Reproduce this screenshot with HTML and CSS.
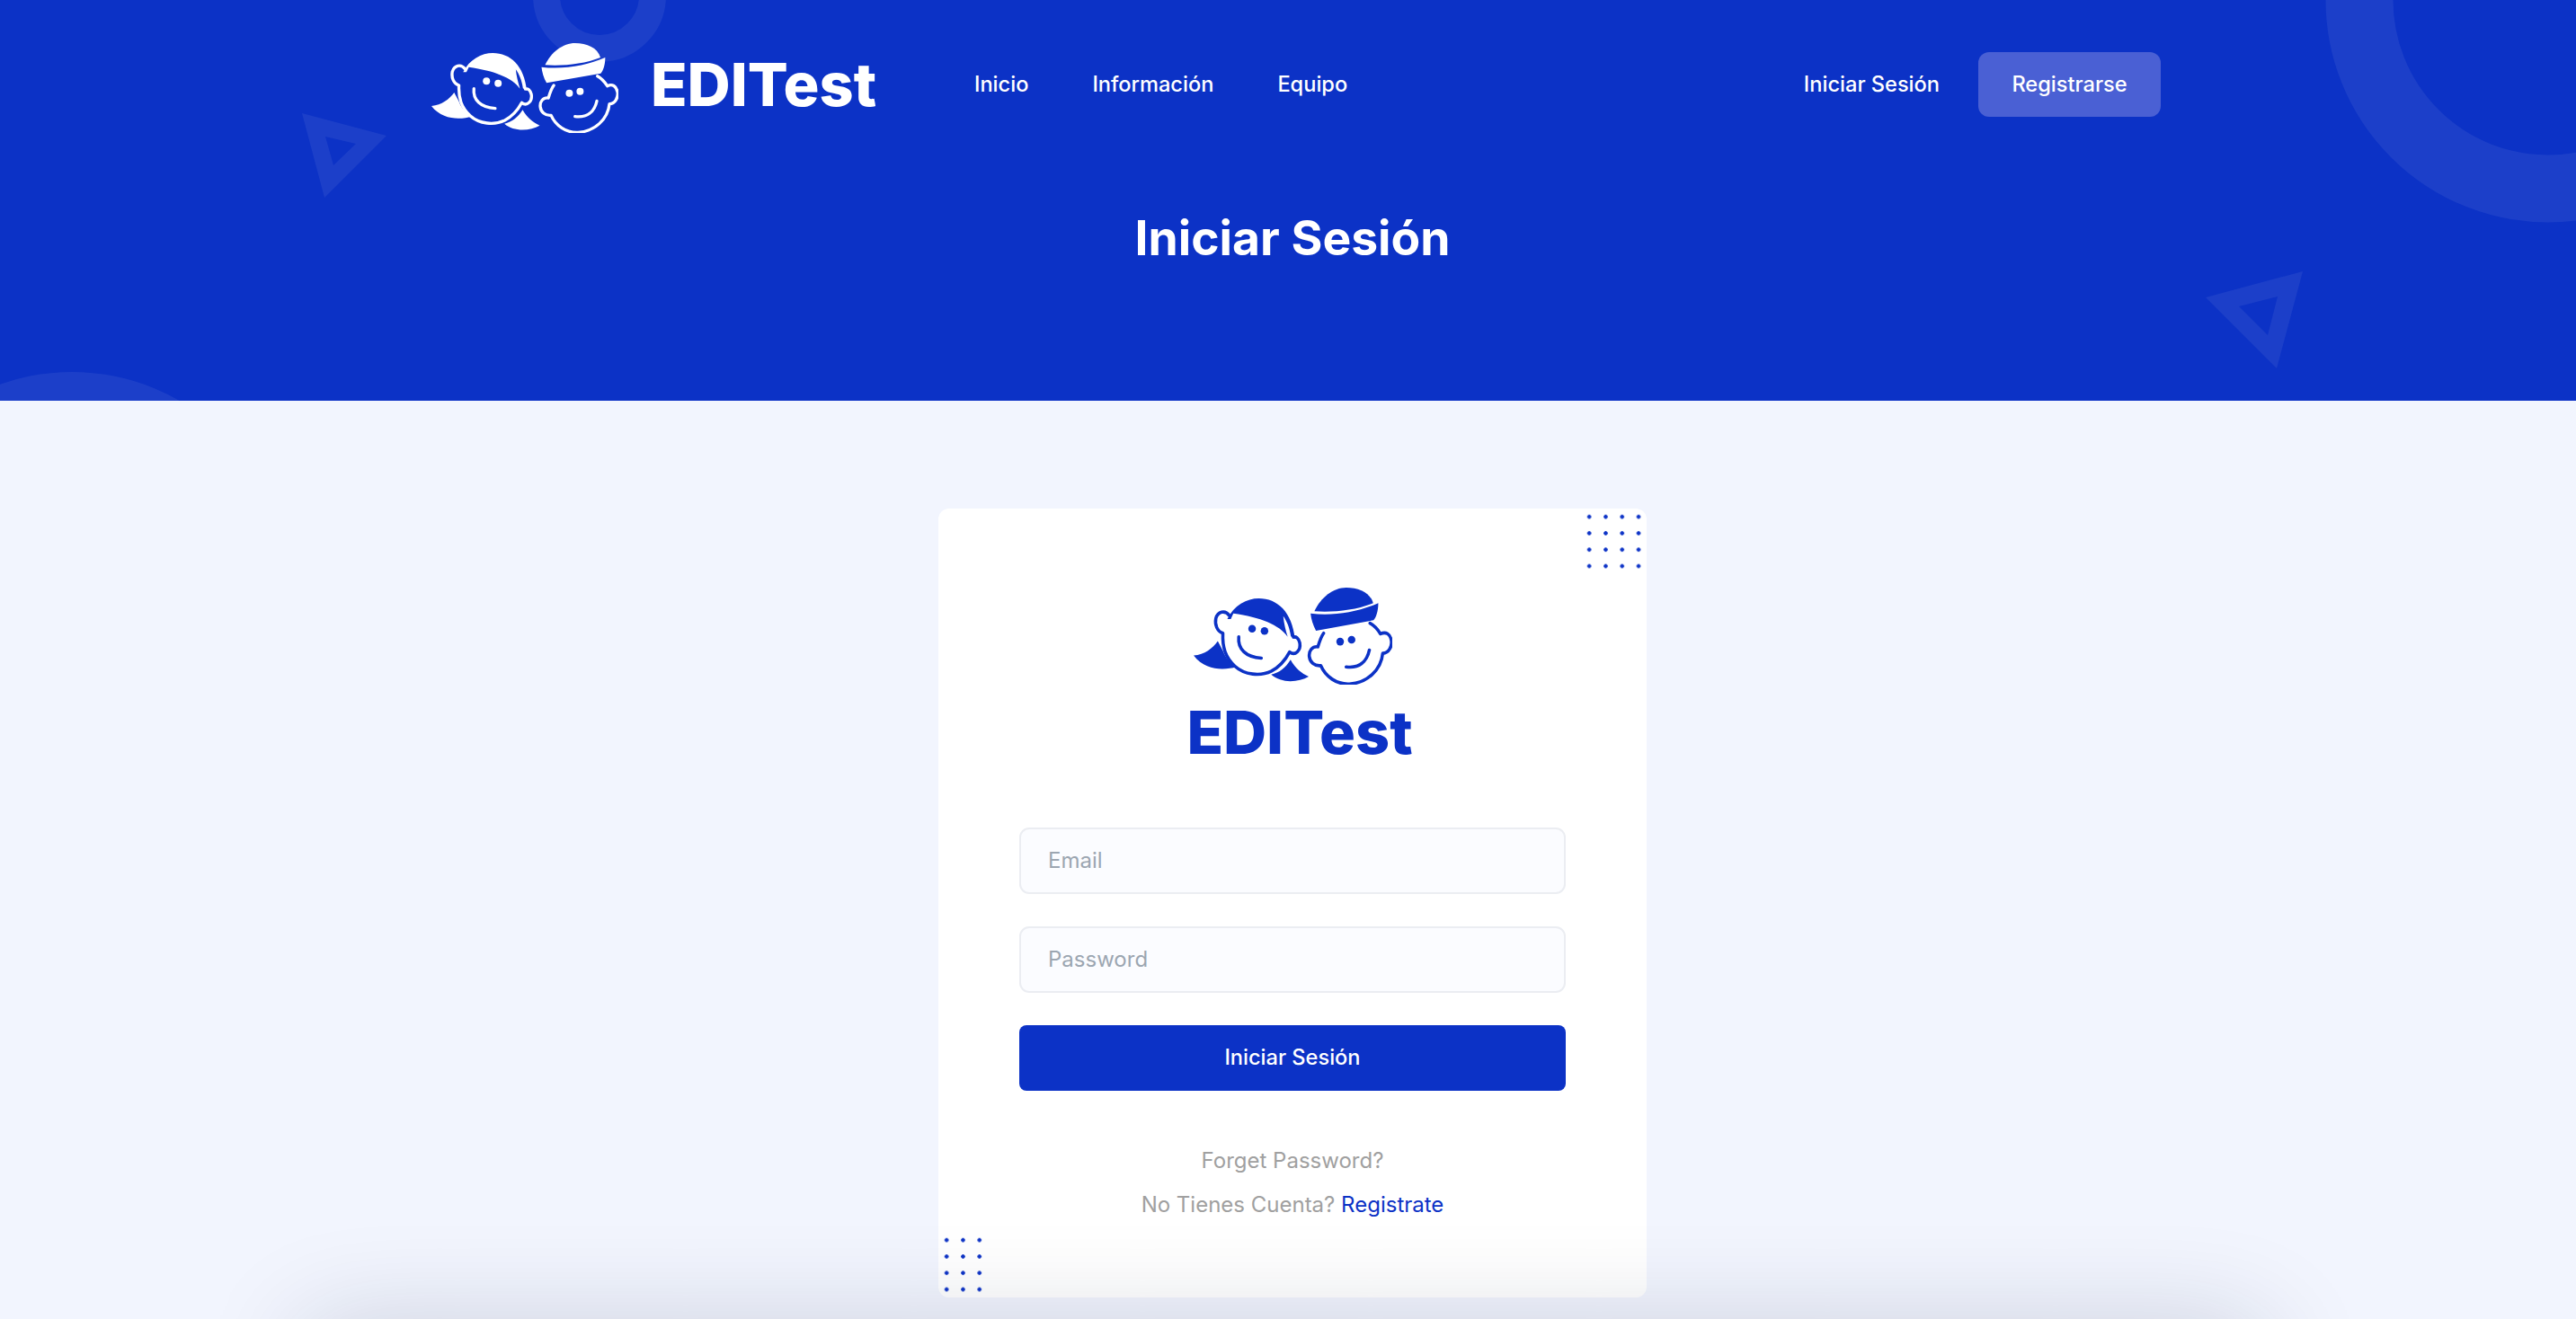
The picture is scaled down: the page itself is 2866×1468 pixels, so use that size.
FILE: index.html
```html
<!DOCTYPE html>
<html lang="es">
<head>
<meta charset="utf-8">
<title>EDITest - Iniciar Sesión</title>
<link rel="stylesheet" href="styles.css">
</head>
<body>
<svg class="defs" width="0" height="0" aria-hidden="true">
  <symbol id="faces" viewBox="30 55 625 300" preserveAspectRatio="none">
    <g fill="currentColor">
      <path d="M136 152C156 110 198 88 235 88C294 88 340 130 349 214L336 206C332 178 323 158 312 143C314 165 320 188 326 207C300 170 240 147 155 135L147 152Z"/>
      <path d="M30 265C65 262 90 242 106 220L122 250C130 272 145 288 164 300C130 310 68 314 30 265Z"/>
      <path d="M274 324C300 318 320 302 335 278C350 305 370 320 392 330C360 348 306 352 274 324Z"/>
      <path d="M410 128C430 85 470 55 510 55C550 55 585 70 595 103C540 125 470 132 410 128Z"/>
      <path d="M398 135C470 144 550 130 611 103C611 128 604 148 596 156L415 188C405 170 400 152 398 135Z"/>
      <circle cx="214" cy="182" r="12"/>
      <circle cx="253" cy="189" r="12"/>
      <circle cx="491" cy="222" r="12"/>
      <circle cx="527" cy="216" r="12"/>
    </g>
    <g fill="none" stroke="currentColor" stroke-width="10" stroke-linecap="round" stroke-linejoin="round">
      <path d="M143 142C128 122 106 130 100 150C96 170 104 190 122 196C120 240 130 270 160 298C190 325 240 330 275 313C300 300 318 280 332 254C350 268 368 248 364 226C360 210 352 206 344 208"/>
      <path d="M172 207C168 245 195 270 243 273"/>
      <path d="M439 196C430 208 425 225 421 238C403 236 392 250 394 268C396 285 410 298 430 296C445 330 480 355 520 353C575 350 620 310 625 258C645 258 655 235 652 218C648 198 635 190 618 198C608 182 598 172 585 165"/>
      <path d="M583 248C575 285 550 305 510 300"/>
    </g>
  </symbol>
</svg>

<header class="hero">
  <svg class="shapes" viewBox="0 0 2866 446" width="2866" height="446" aria-hidden="true">
    <g class="shape-fill">
      <path fill-rule="evenodd" d="M336 126L430 151L361 220ZM362 152L371 184L396 160Z"/>
      <path fill-rule="evenodd" d="M2562 302L2454 331L2533 410ZM2534 330L2491 341L2523 373Z"/>
      <circle cx="80" cy="654" r="240"/>
    </g>
    <g class="shape-ring">
      <circle cx="667" cy="-5" r="59" stroke-width="30"/>
      <circle cx="2835" cy="0" r="210" stroke-width="75"/>
    </g>
  </svg>

  <nav class="nav">
    <a class="brand" href="#">
      <svg class="brand-faces"><use href="#faces"/></svg>
      <span class="brand-name">EDITest</span>
    </a>
    <ul class="menu">
      <li><a class="menu-link" href="#">Inicio</a></li>
      <li><a class="menu-link" href="#">Información</a></li>
      <li><a class="menu-link" href="#">Equipo</a></li>
    </ul>
    <div class="actions">
      <a class="menu-link" href="#">Iniciar Sesión</a>
      <a class="signup" href="#">Registrarse</a>
    </div>
  </nav>

  <h1 class="page-title">Iniciar Sesión</h1>
</header>

<main class="content">
  <section class="card">
    <span class="dots dots-top"></span>
    <span class="dots dots-bottom"></span>
    <div class="card-logo">
      <svg class="card-faces"><use href="#faces"/></svg>
      <span class="card-name">EDITest</span>
    </div>
    <form class="form">
      <input class="field" type="email" placeholder="Email">
      <input class="field" type="password" placeholder="Password">
      <button class="submit" type="button">Iniciar Sesión</button>
    </form>
    <div class="links">
      <p class="links-line"><a class="muted" href="#">Forget Password?</a></p>
      <p class="links-line">No Tienes Cuenta? <a class="accent" href="#">Registrate</a></p>
    </div>
  </section>
</main>

<div class="footer-clip"><div class="footer-shadow"></div></div>
</body>
</html>
```

FILE: styles.css
```css
* { box-sizing: border-box; }

html, body {
  margin: 0;
  height: 1468px;
  overflow: hidden;
}

body {
  position: relative;
  background: #f2f5fe;
  font-family: Inter, "Liberation Sans", sans-serif;
  font-size: 24px;
}

a { text-decoration: none; }

.defs { position: absolute; }

.hero {
  position: relative;
  height: 446px;
  overflow: hidden;
  background: #0c32c6;
  color: #fff;
}

.shapes {
  position: absolute;
  top: 0;
  left: 0;
}

.shape-fill { fill: #fff; fill-opacity: .065; }
.shape-ring { fill: none; stroke: #fff; stroke-opacity: .065; }

.nav {
  position: relative;
  display: flex;
  align-items: flex-start;
  padding: 48px 462px 0 480px;
}

.brand {
  display: flex;
  width: 500px;
  color: #fff;
}

.brand-faces {
  flex: none;
  width: 208px;
  height: 100px;
}

.brand-name {
  margin: 12px 0 0 36px;
  font-size: 66.6px;
  line-height: 67px;
  font-weight: 800;
}

.menu {
  display: flex;
  gap: 71px;
  margin: 10px 0 0 104px;
  padding: 0;
  list-style: none;
}

.menu-link {
  display: block;
  color: #fff;
  font-size: 23.6px;
  font-weight: 500;
  line-height: 71px;
}

.actions {
  display: flex;
  gap: 43px;
  margin: 10px 0 0 auto;
}

.signup {
  display: block;
  width: 203px;
  height: 72px;
  border-radius: 12px;
  background: #4a60d4;
  color: #fff;
  font-size: 23.6px;
  font-weight: 500;
  line-height: 71px;
  text-align: center;
}

.page-title {
  position: relative;
  margin: 84px 0 0;
  padding-left: 10px;
  font-size: 53.4px;
  line-height: 65px;
  font-weight: 700;
  text-align: center;
}

.content {
  padding: 120px 0 0 10px;
}

.card {
  position: relative;
  width: 788px;
  height: 878px;
  margin: 0 auto;
  padding: 88px 90px 0;
  border-radius: 12px;
  background: #fff;
  overflow: hidden;
}

.dots {
  position: absolute;
  background-image: radial-gradient(circle, #0c32c6 1.9px, transparent 2.5px);
  background-size: 18.3px 18.3px;
}

.dots-top {
  top: 0;
  right: 0;
  width: 73px;
  height: 73px;
}

.dots-bottom {
  bottom: 0;
  left: 0;
  width: 55px;
  height: 73px;
}

.card-logo {
  display: flex;
  flex-direction: column;
  align-items: center;
  color: #0c32c6;
}

.card-faces {
  width: 221px;
  height: 108px;
}

.card-name {
  margin: 20px 0 0 16px;
  font-size: 66.6px;
  line-height: 66px;
  font-weight: 800;
}

.form {
  display: flex;
  flex-direction: column;
  gap: 36px;
  margin-top: 73px;
}

.field {
  width: 100%;
  height: 74px;
  padding: 0 30px 2px;
  border: 2px solid #ebedf2;
  border-radius: 11px;
  background: #fbfcff;
  font: 400 24px Inter, "Liberation Sans", sans-serif;
  color: #333;
}

.field::placeholder {
  color: #9ca6b1;
  opacity: 1;
}

.submit {
  height: 73px;
  padding: 0 0 2px;
  border: 0;
  border-radius: 8px;
  background: #0c32c6;
  color: #fff;
  font: 500 23.6px Inter, "Liberation Sans", sans-serif;
}

.links {
  margin-top: 53px;
  color: #a0a0a0;
  text-align: center;
}

.links-line {
  margin: 0;
  line-height: 49px;
}

.muted { color: #a0a0a0; }
.accent { color: #0c32c6; }

.footer-clip {
  position: absolute;
  left: 0;
  right: 0;
  bottom: 0;
  height: 200px;
  overflow: hidden;
}

.footer-shadow {
  position: absolute;
  top: 212px;
  left: 340px;
  right: 349px;
  height: 100px;
  box-shadow: 0 0 120px rgba(20, 30, 60, .2);
}
```
